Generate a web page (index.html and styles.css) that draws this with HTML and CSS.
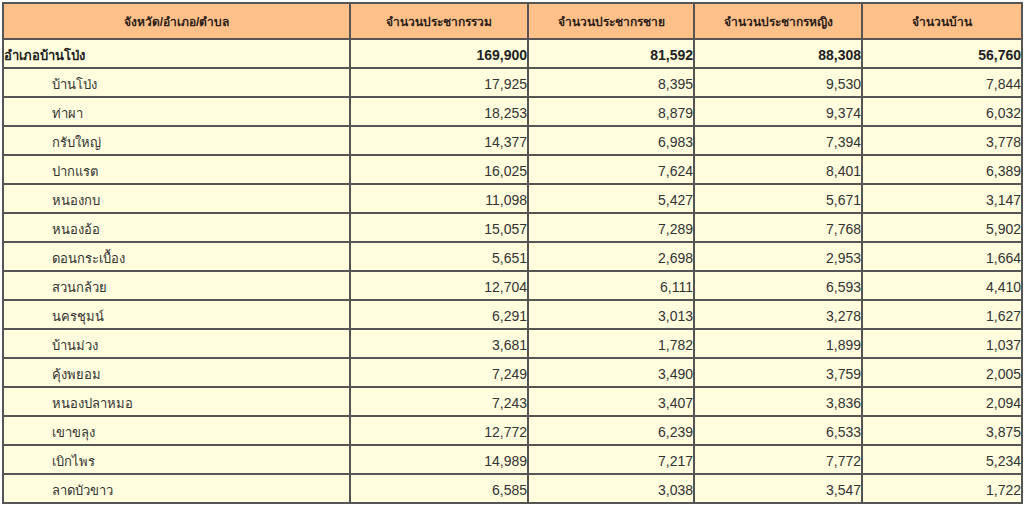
FILE: index.html
```html
<!DOCTYPE html>
<html lang="th">
<head>
<meta charset="utf-8">
<title>จำนวนประชากร อำเภอบ้านโป่ง</title>
<link rel="stylesheet" href="styles.css">
</head>
<body>
<table class="pop">
  <colgroup>
    <col class="c-name">
    <col class="c-total">
    <col class="c-male">
    <col class="c-female">
    <col class="c-house">
  </colgroup>
  <thead>
    <tr>
      <th>จังหวัด/อำเภอ/ตำบล</th>
      <th>จำนวนประชากรรวม</th>
      <th>จำนวนประชากรชาย</th>
      <th>จำนวนประชากรหญิง</th>
      <th>จำนวนบ้าน</th>
    </tr>
  </thead>
  <tbody>
    <tr class="sum"><td class="name">อำเภอบ้านโป่ง</td><td>169,900</td><td>81,592</td><td>88,308</td><td>56,760</td></tr>
    <tr><td class="name sub">บ้านโป่ง</td><td>17,925</td><td>8,395</td><td>9,530</td><td>7,844</td></tr>
    <tr><td class="name sub">ท่าผา</td><td>18,253</td><td>8,879</td><td>9,374</td><td>6,032</td></tr>
    <tr><td class="name sub">กรับใหญ่</td><td>14,377</td><td>6,983</td><td>7,394</td><td>3,778</td></tr>
    <tr><td class="name sub">ปากแรต</td><td>16,025</td><td>7,624</td><td>8,401</td><td>6,389</td></tr>
    <tr><td class="name sub">หนองกบ</td><td>11,098</td><td>5,427</td><td>5,671</td><td>3,147</td></tr>
    <tr><td class="name sub">หนองอ้อ</td><td>15,057</td><td>7,289</td><td>7,768</td><td>5,902</td></tr>
    <tr><td class="name sub">ดอนกระเบื้อง</td><td>5,651</td><td>2,698</td><td>2,953</td><td>1,664</td></tr>
    <tr><td class="name sub">สวนกล้วย</td><td>12,704</td><td>6,111</td><td>6,593</td><td>4,410</td></tr>
    <tr><td class="name sub">นครชุมน์</td><td>6,291</td><td>3,013</td><td>3,278</td><td>1,627</td></tr>
    <tr><td class="name sub">บ้านม่วง</td><td>3,681</td><td>1,782</td><td>1,899</td><td>1,037</td></tr>
    <tr><td class="name sub">คุ้งพยอม</td><td>7,249</td><td>3,490</td><td>3,759</td><td>2,005</td></tr>
    <tr><td class="name sub">หนองปลาหมอ</td><td>7,243</td><td>3,407</td><td>3,836</td><td>2,094</td></tr>
    <tr><td class="name sub">เขาขลุง</td><td>12,772</td><td>6,239</td><td>6,533</td><td>3,875</td></tr>
    <tr><td class="name sub">เบิกไพร</td><td>14,989</td><td>7,217</td><td>7,772</td><td>5,234</td></tr>
    <tr><td class="name sub">ลาดบัวขาว</td><td>6,585</td><td>3,038</td><td>3,547</td><td>1,722</td></tr>
  </tbody>
</table>
</body>
</html>
```

FILE: styles.css
```css
html, body {
  margin: 0;
  padding: 0;
  background: #ffffff;
}

body {
  padding: 2px;
  font-family: Tahoma, "Liberation Sans", "Noto Sans", sans-serif;
  color: #333333;
}

.pop {
  border-collapse: collapse;
  width: 1019px;
  table-layout: fixed;
  border: 2px solid #555555;
}

.c-name { width: 347px; }
.c-total { width: 178px; }
.c-male { width: 166px; }
.c-female { width: 168px; }
.c-house { width: 160px; }

.pop th {
  background: #ffc08a;
  color: #2b2118;
  font-size: 12px;
  font-weight: bold;
  height: 34px;
  padding: 0;
  border: 2px solid #555555;
  text-align: center;
  vertical-align: middle;
}

.pop td {
  background: #fffddd;
  font-size: 14px;
  height: 24px;
  padding: 3px 0 0 0;
  border: 2px solid #555555;
  text-align: right;
  vertical-align: middle;
  font-family: "Liberation Sans", Arial, sans-serif;
}

.pop td.name {
  text-align: left;
  font-size: 13px;
  font-family: Tahoma, "Liberation Sans", "Noto Sans", sans-serif;
}

.pop td.sub {
  padding-left: 48px;
}

.pop tr.sum td {
  font-weight: bold;
  color: #222222;
}
```
